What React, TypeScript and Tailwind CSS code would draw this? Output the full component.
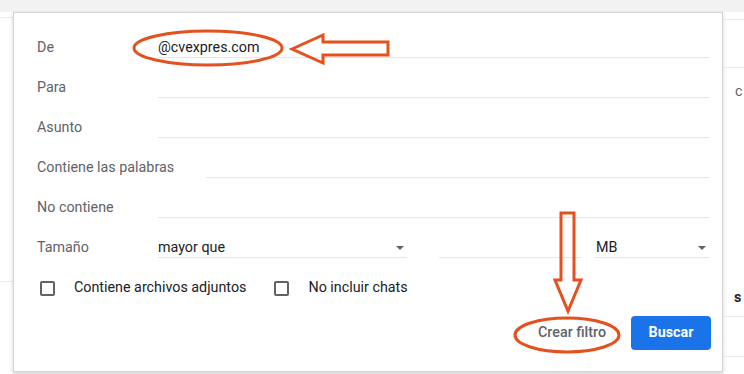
import React from 'react';

const Caret = () => (
    <svg width="8" height="4" viewBox="0 0 8 4" className="shrink-0">
        <path d="M0 0h8L4 4z" fill="#5f6368" />
    </svg>
);

const FieldRow = ({ label, value }: { label: string; value?: string }) => (
    <div className="flex h-10 items-center">
        <div className="min-w-[121px] pr-8 text-[14.3px] text-[#5f6368]">{label}</div>
        <div className="flex h-5 flex-1 items-center border-b border-[#e6e6e6] text-[14.3px] text-[#202124]">
            {value}
        </div>
    </div>
);

const Checkbox = ({ label, className }: { label: string; className?: string }) => (
    <div className={`flex items-center ${className ?? ''}`}>
        <div className="h-[15px] w-[15px] rounded-[2px] border-2 border-[#5f6368]" />
        <span className="ml-[19px] text-[14.3px] text-[#202124]">{label}</span>
    </div>
);

export default function App() {
    return (
        <div
            className="relative flex h-[374px] w-[744px] flex-col overflow-hidden bg-white"
            style={{ fontFamily: 'Roboto, "Liberation Sans", Arial, sans-serif' }}
        >
            {/* Top strip of the page behind */}
            <div className="h-3 shrink-0 bg-[#f2f2f2]" />

            <div className="flex flex-1">
                {/* Left edge of the mail list */}
                <div className="flex w-[13px] shrink-0 flex-col">
                    <div className="h-[6px] border-b border-[#ececec]" />
                    <div className="h-[264px] border-b border-[#ececec]" />
                </div>

                {/* Search panel */}
                <div className="flex h-[360px] w-[710px] shrink-0 flex-col border border-[#d4d4d4] bg-white pl-[23px] pr-[13px] pt-[15px] shadow-[0_2px_4px_rgba(0,0,0,0.18)]">
                    <FieldRow label="De" value="@cvexpres.com" />
                    <FieldRow label="Para" />
                    <FieldRow label="Asunto" />
                    <FieldRow label="Contiene las palabras" />
                    <FieldRow label="No contiene" />

                    {/* Tamaño */}
                    <div className="flex h-10 items-center">
                        <div className="min-w-[121px] pr-8 text-[14.3px] text-[#5f6368]">Tamaño</div>
                        <div className="flex h-5 w-[249px] items-center justify-between border-b border-[#e6e6e6] pr-[3px] text-[14.3px] text-[#202124]">
                            mayor que
                            <Caret />
                        </div>
                        <div className="ml-8 h-5 w-[143px] border-b border-[#e6e6e6]" />
                        <div className="ml-3 flex h-5 flex-1 items-center justify-between border-b border-[#e6e6e6] pl-[2px] pr-[3px] text-[14.3px] text-[#202124]">
                            MB
                            <Caret />
                        </div>
                    </div>

                    {/* Checkboxes */}
                    <div className="flex h-10 items-center pl-[3px]">
                        <Checkbox label="Contiene archivos adjuntos" />
                        <Checkbox label="No incluir chats" className="ml-[28px]" />
                    </div>

                    {/* Actions */}
                    <div className="-mr-[2px] mt-[8px] flex items-center justify-end">
                        <button className="mr-[25px] text-[14.3px] font-medium text-[#5f6368]">Crear filtro</button>
                        <button className="h-[34px] w-[80px] rounded bg-[#1a73e8] text-[14.3px] font-bold text-white">
                            Buscar
                        </button>
                    </div>
                </div>

                {/* Right edge of the mail list */}
                <div className="flex flex-1 flex-col text-[14.3px]">
                    <div className="h-[8px] border-b border-[#ececec]" />
                    <div className="h-[48px] border-b border-[#ececec]" />
                    <div className="flex h-[48px] items-center pl-[12px] text-[#5f6368]">c</div>
                    <div className="h-[170px]" />
                    <div className="h-[31px] border-b border-[#ececec] pl-[11px] pt-[1px] font-bold text-[#202124]">s</div>
                    <div className="h-[40px] border-b border-[#ececec]" />
                </div>
            </div>

            {/* Red annotations */}
            <svg className="pointer-events-none absolute inset-0" width="744" height="374" viewBox="0 0 744 374">
                <g fill="none" stroke="#e4501e" strokeWidth="3" strokeLinejoin="miter">
                    <ellipse cx="208" cy="48" rx="74" ry="17" />
                    <polygon points="292,49 323,35 323,42 388,42 388,55 323,55 323,63" />
                    <polygon points="561,213 574,213 574,280 581,280 568,311 555,280 561,280" />
                    <ellipse cx="567" cy="335" rx="52" ry="17" />
                </g>
            </svg>
        </div>
    );
}
